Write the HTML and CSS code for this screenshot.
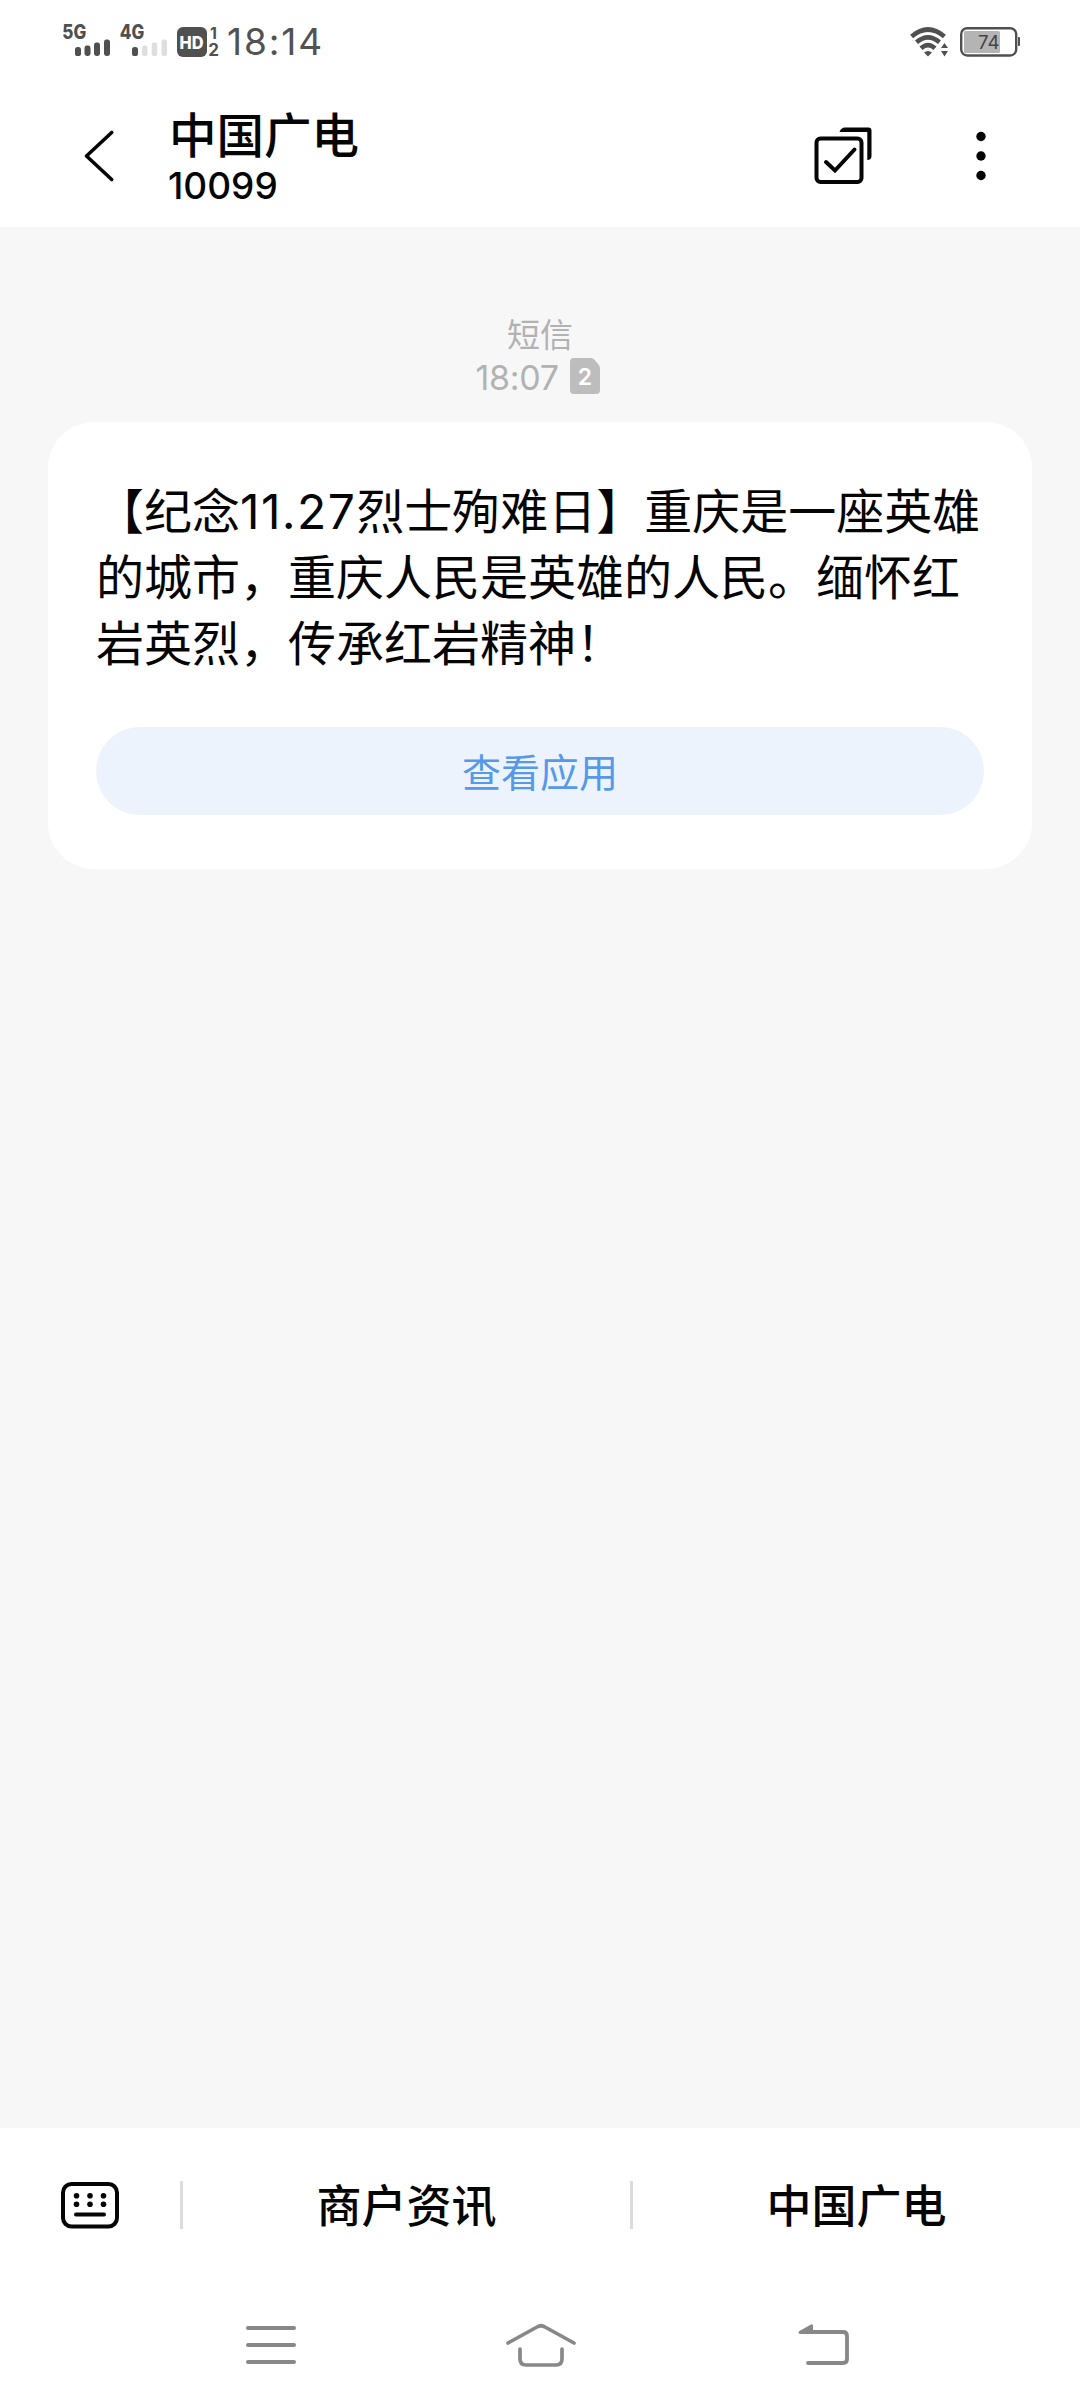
FILE: index.html
```html
<!DOCTYPE html>
<html lang="zh-CN">
<head>
<meta charset="utf-8">
<title>中国广电</title>
<link rel="stylesheet" href="styles.css">
</head>
<body>
<div class="screen">
  <div class="status-bar">
    <div class="status-left">
      <svg class="signals" width="158" height="42" viewBox="62 21 158 42">
        <g fill="#505050">
          <text class="net" x="62.3" y="39.3" textLength="24" lengthAdjust="spacingAndGlyphs">5G</text>
          <rect x="75" y="47" width="6" height="9" rx="2.6"/>
          <rect x="84.5" y="45.5" width="6" height="10.5" rx="2.4"/>
          <rect x="94" y="42.5" width="6" height="13.5" rx="2.4"/>
          <rect x="104" y="39.5" width="6" height="16.5" rx="2.4"/>
          <text class="net" x="119.8" y="39.3" textLength="24.5" lengthAdjust="spacingAndGlyphs">4G</text>
          <rect x="132" y="47" width="6" height="9" rx="2.6"/>
          <rect x="177" y="27" width="30" height="30" rx="6"/>
          <text class="sim" x="210" y="38.5" font-size="16">1</text>
          <text class="sim" x="208.3" y="56" font-size="17">2</text>
        </g>
        <g fill="#dedede">
          <rect x="142" y="45.5" width="5.5" height="10.5" rx="2"/>
          <rect x="151.7" y="42.5" width="5.5" height="13.5" rx="2"/>
          <rect x="161.5" y="39.5" width="5.5" height="16.5" rx="2"/>
        </g>
        <text class="hd" x="179.5" y="48.8" textLength="24" lengthAdjust="spacingAndGlyphs">HD</text>
      </svg>
      <span class="clock">18:14</span>
    </div>
    <svg class="status-right" width="112" height="34" viewBox="909 25 112 34">
      <g fill="none" stroke="#505050" stroke-width="4.6">
        <path d="M911.6 36.5Q928 22.5 944.4 36.5"/>
        <path d="M916.5 42.3Q928 32.5 939.5 42.3"/>
        <path d="M921 48.3Q928 42 935 48.3"/>
      </g>
      <path d="M924 52.5Q928 49.5 932 52.5L928 56.5ZM941 48L944.5 43L948 48ZM941 51L948 51L944.5 56.5Z" fill="#505050"/>
      <rect x="961.2" y="28.2" width="55" height="27.3" rx="6" fill="#fff" stroke="#505050" stroke-width="2.4"/>
      <rect x="964" y="31" width="36" height="22" rx="1.5" fill="#b4b4b4"/>
      <path d="M1018 37h1a1 1 0 0 1 1 1v7a1 1 0 0 1-1 1h-1z" fill="#505050"/>
      <text class="battery" x="978" y="49" textLength="21.5" lengthAdjust="spacingAndGlyphs">74</text>
    </svg>
  </div>

  <header class="header">
    <svg class="back" width="30" height="54" viewBox="84 129 30 54">
      <path d="M111.7 132.5L86.5 156L111.7 179.5" fill="none" stroke="#050505" stroke-width="3.6" stroke-linecap="round" stroke-linejoin="round"/>
    </svg>
    <div class="contact">
      <div class="name">中国广电</div>
      <div class="number">10099</div>
    </div>
    <svg class="select" width="60" height="60" viewBox="813 126 60 60">
      <g fill="none" stroke="#050505" stroke-width="4">
        <rect x="816.5" y="138.5" width="45" height="43.5" rx="4"/>
        <path d="M826 162L835 170.5L854.5 149.5" stroke-linecap="round"/>
      </g>
      <path d="M839.5 132Q841 127.5 845 127.5H868.5Q871.5 127.5 871.5 130.5V156Q871.5 160 867.3 160V132Z" fill="#050505"/>
    </svg>
    <svg class="more" width="12" height="52" viewBox="975 130 12 52">
      <g fill="#050505">
        <circle cx="981" cy="136.5" r="4.7"/>
        <circle cx="981" cy="156" r="4.7"/>
        <circle cx="981" cy="175.5" r="4.7"/>
      </g>
    </svg>
  </header>

  <main class="thread">
    <div class="kind">短信</div>
    <div class="stamp">
      <span class="time">18:07</span>
      <svg width="30" height="36" viewBox="0 0 30 36">
        <path d="M4 0H21Q23 0 24.5 1.8L28.8 7Q30 8.5 30 10.5V32Q30 36 26 36H4Q0 36 0 32V4Q0 0 4 0Z" fill="#bdbdbd"/>
        <text class="slot" x="15" y="26.5" text-anchor="middle">2</text>
      </svg>
    </div>
    <article class="card">
      <p class="message">【纪念<span class="digits">11.27</span>烈士殉难日】重庆是一座英雄<br>的城市，重庆人民是英雄的人民。缅怀红<br>岩英烈，传承红岩精神！</p>
      <div class="action">查看应用</div>
    </article>
  </main>

  <footer class="menu">
    <div class="keyboard">
      <svg width="60" height="48" viewBox="60 2181 60 48">
        <rect x="63" y="2184" width="54" height="42.5" rx="8.5" fill="none" stroke="#050505" stroke-width="4"/>
        <g fill="#050505">
          <circle cx="76.5" cy="2195.7" r="2.8"/><circle cx="90" cy="2195.7" r="2.8"/><circle cx="103.5" cy="2195.7" r="2.8"/>
          <circle cx="76.5" cy="2204.3" r="2.8"/><circle cx="90" cy="2204.3" r="2.8"/><circle cx="103.5" cy="2204.3" r="2.8"/>
        </g>
        <path d="M76 2214.5H104" stroke="#050505" stroke-width="4" stroke-linecap="round"/>
      </svg>
    </div>
    <div class="menu-item">商户资讯</div>
    <div class="menu-item">中国广电</div>
  </footer>

  <nav class="nav">
    <svg width="52" height="44" viewBox="245 2323 52 44">
      <path d="M248 2328H294M248 2345H294M248 2362H294" stroke="#888" stroke-width="4" stroke-linecap="round"/>
    </svg>
    <svg width="72" height="46" viewBox="505 2321 72 46">
      <g fill="none" stroke="#888" stroke-width="3.7" stroke-linecap="round">
        <path d="M508 2342L537 2326Q541 2323.5 545 2326L574 2342"/>
        <path d="M520 2348V2358Q520 2364 526 2364H556Q562 2364 562 2358V2348"/>
      </g>
    </svg>
    <svg width="54" height="44" viewBox="797 2322 54 44">
      <path d="M802 2331H843Q847 2331 847 2335V2358Q847 2362 843 2362H808" fill="none" stroke="#888" stroke-width="3.8" stroke-linecap="round"/>
      <path d="M813 2323V2333H800Q797 2332 799.5 2330L811 2323.5Q813 2322.5 813 2325Z" fill="#888"/>
    </svg>
  </nav>
</div>
</body>
</html>
```
FILE: styles.css
```css
* { box-sizing: border-box; }
body { margin: 0; background: #fff; }
svg { display: block; flex: none; overflow: visible; }

.screen {
  display: flex;
  flex-direction: column;
  width: 1080px;
  height: 2408px;
  overflow: hidden;
  background: #fff;
  color: #050505;
  font-family: Inter, "Noto Sans CJK SC", sans-serif;
}

.status-bar {
  display: flex;
  justify-content: space-between;
  align-items: center;
  height: 84px;
  padding: 0 59px 0 62px;
}
.status-left { display: flex; align-items: center; gap: 7px; }
.net { font-size: 19.5px; font-weight: 800; }
.sim { font-weight: 700; }
.hd { font-size: 17px; font-weight: 800; fill: #fff; }
.clock {
  color: #525252;
  font-size: 37px;
  line-height: 44px;
  letter-spacing: 1.9px;
}
.battery { font-size: 19px; fill: #444; }

.header {
  display: flex;
  align-items: center;
  height: 143px;
  padding: 0 93px 0 84px;
}
.contact { width: 591px; margin-left: 54px; }
.name {
  padding-left: 1px;
  font-family: "Noto Sans CJK SC", sans-serif;
  font-size: 47.5px;
  font-weight: 500;
  line-height: 58px;
}
.number {
  padding-top: 3px;
  font-size: 37px;
  font-weight: 500;
  line-height: 42px;
}
.select { margin-left: 54px; }
.more { margin-left: auto; }

.thread {
  flex: 1;
  padding: 86px 48px 0;
  background: #f7f7f7;
}
.kind {
  height: 44px;
  color: #b2b2b2;
  font-size: 33px;
  line-height: 44px;
  text-align: center;
}
.stamp {
  display: flex;
  justify-content: center;
  align-items: center;
  gap: 11px;
  height: 38px;
  padding-right: 5px;
  color: #b2b2b2;
}
.time { padding-top: 2px; font-size: 34px; font-weight: 400; letter-spacing: -0.3px; }
.slot { font-size: 23px; font-weight: 600; fill: #fff; }

.card {
  margin-top: 27px;
  padding: 53px 48px 54px;
  border-radius: 46px;
  background: #fff;
}
.message {
  margin: 0;
  font-family: "Noto Sans CJK SC", sans-serif;
  font-size: 48px;
  line-height: 66px;
  white-space: nowrap;
}
.digits { font-family: Inter, sans-serif; line-height: 1; letter-spacing: 1.4px; }
.action {
  height: 88px;
  margin-top: 54px;
  border-radius: 44px;
  background: #edf3fd;
  color: #5599e8;
  font-size: 39px;
  line-height: 91px;
  text-align: center;
}

.menu {
  display: flex;
  align-items: center;
  height: 154px;
}
.keyboard { width: 180px; padding-left: 60px; }
.menu-item {
  flex: 1;
  height: 48px;
  border-left: 3px solid #dcdcdc;
  font-size: 45px;
  font-weight: 500;
  line-height: 51px;
  text-align: center;
}

.nav {
  display: grid;
  grid-template-columns: 260px 292px 54px;
  align-items: center;
  height: 126px;
  padding-left: 245px;
}
```
